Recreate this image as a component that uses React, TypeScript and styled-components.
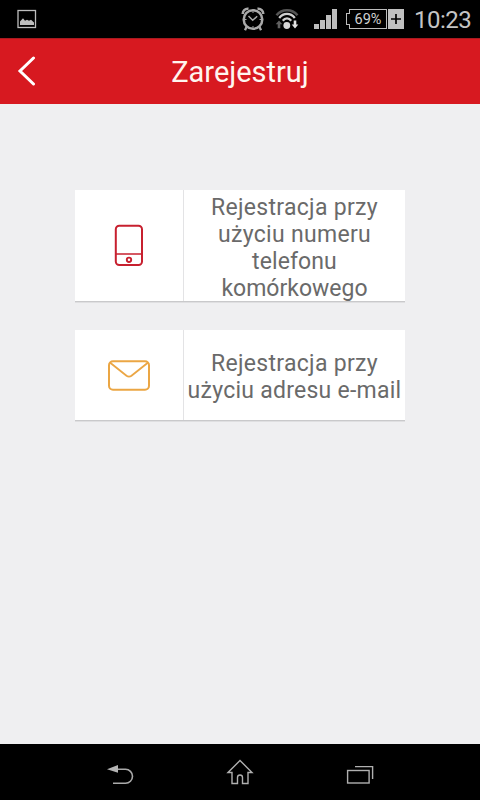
import React from "react";
import styled, { createGlobalStyle } from "styled-components";

const GlobalStyle = createGlobalStyle`
  * { box-sizing: border-box; }
  body { margin: 0; background: #efeff1; font-family: Roboto, sans-serif; }
  svg { display: block; flex: none; }
`;

const Screen = styled.div`
  display: flex;
  flex-direction: column;
  width: 480px;
  height: 800px;
  background: #efeff1;
  overflow: hidden;
`;

const StatusBar = styled.div`
  display: flex;
  align-items: center;
  justify-content: space-between;
  height: 38px;
  padding: 0 8px 0 17px;
  background: #000;
`;

const StatusGroup = styled.div`
  display: flex;
  align-items: center;
`;

const StatusIcon = styled.svg<{ $gap: number }>`
  margin-right: ${(p) => p.$gap}px;
`;

const Battery = styled.div`
  display: flex;
  align-items: center;
  height: 20px;
  margin-right: 10px;
`;

const BatteryNub = styled.div`
  width: 4px;
  height: 12px;
  border: 1px solid #bdbdbd;
  border-right: 0;
  margin-right: -1px;
  background: #000;
  z-index: 1;
`;

const BatteryLevel = styled.div`
  width: 38px;
  height: 20px;
  border: 1px solid #bdbdbd;
  color: #d0d0d0;
  font-size: 14.5px;
  line-height: 19px;
  text-align: center;
`;

const BatteryPlus = styled.svg`
  margin-left: 1px;
`;

const Clock = styled.div`
  color: #c4c4c4;
  width: 58px;
  font-size: 24px;
  line-height: 38px;
  padding-top: 1px;
  height: 38px;
  letter-spacing: -0.5px;
  white-space: nowrap;
`;

const Header = styled.header`
  display: grid;
  grid-template-columns: 54px 1fr 54px;
  align-items: center;
  height: 66px;
  background: #d71920;
  border-top: 1px solid #a81a20;
`;

const BackButton = styled.button`
  display: flex;
  align-items: center;
  height: 65px;
  padding: 0 0 2px 17px;
  border: 0;
  background: none;
`;

const Title = styled.h1`
  margin: 0;
  color: #fff5ef;
  font-size: 29px;
  font-weight: 400;
  line-height: 34px;
  text-align: center;
`;

const Content = styled.main`
  display: flex;
  flex: 1;
  flex-direction: column;
  align-items: center;
  gap: 28px;
  padding-top: 86px;
`;

const OptionCard = styled.button<{ $height: number }>`
  display: flex;
  width: 330px;
  height: ${(p) => p.$height}px;
  padding: 0;
  border: 0;
  border-bottom: 1px solid #c9c9cb;
  box-shadow: 0 1px 0 #dfdfe1;
  background: #fff;
  font-family: inherit;
`;

const IconCell = styled.span`
  display: flex;
  align-items: center;
  justify-content: center;
  width: 109px;
  height: 100%;
  border-right: 1px solid #e3e3e5;
`;

const Label = styled.span`
  display: flex;
  flex: 1;
  flex-direction: column;
  align-items: center;
  justify-content: center;
  height: 100%;
  padding-top: 4px;
  color: #6a6a6a;
  font-size: 23px;
  line-height: 27px;
`;

const Line = styled.span<{ $spacing: number }>`
  white-space: nowrap;
  letter-spacing: ${(p) => p.$spacing}px;
`;

const NavBar = styled.nav`
  display: flex;
  align-items: center;
  justify-content: center;
  gap: 80px;
  height: 56px;
  background: #000;
`;

const NavButton = styled.button`
  display: flex;
  width: 40px;
  height: 56px;
  padding: 0;
  border: 0;
  background: none;
`;

const PictureIcon = () => (
  <svg width="20" height="20" viewBox="0 0 20 20">
    <rect x="1" y="1.500" width="17.500" height="17" fill="none" stroke="#bdbdbd" strokeWidth="1.300" />
    <path d="M3 16v-3.500l3-3.300 2 2.500 2-1 2 1 2-1 3 2.800v2.500z" fill="#bdbdbd" />
  </svg>
);

const AlarmIcon = () => (
  <StatusIcon $gap={10} width="24" height="26" viewBox="0 0 24 26" fill="none" stroke="#a9a9a9">
    <circle cx="12" cy="13.500" r="9.300" strokeWidth="2.500" />
    <path d="M7.500 10l4.200 4.300 4.500-4" strokeWidth="1.500" />
    <path d="M1.800 8C1.500 5 4 2.300 7.500 2.800M22.200 8C22.500 5 20 2.300 16.500 2.800" strokeWidth="2.500" />
    <path d="M5.500 21l-1.500 3.300M18.500 21l1.500 3.300" strokeWidth="2.300" />
    <path d="M12 5.500V7M12 20v1.500M4 13.500h1.500M18.500 13.500H20" strokeWidth="1" />
  </StatusIcon>
);

const WifiIcon = () => (
  <StatusIcon $gap={15} width="24" height="24" viewBox="0 0 24 24" fill="none">
    <path d="M1.500 8.300C7 1.700 17 1.700 22.500 8.300" stroke="#555" strokeWidth="2.500" />
    <path d="M4.200 11C8.500 5.600 15.500 5.600 19.800 11" stroke="#cfcfcf" strokeWidth="2.300" />
    <path d="M7.800 13.700C10 10.700 14 10.700 16.200 13.700" stroke="#cfcfcf" strokeWidth="2.300" />
    <circle cx="11.800" cy="18.500" r="3.400" fill="#d6d6d6" />
    <path d="M4 13.500l3.300 3.700H5.300v4H2.700v-4H.700z" fill="#606060" />
    <path d="M18.700 13.500h2.600v4h2l-3.300 4-3.300-4h2z" fill="#e2e2e2" />
  </StatusIcon>
);

const SignalIcon = () => (
  <StatusIcon $gap={9} width="23" height="20" viewBox="0 0 23 20" fill="#bdbdbd">
    <path d="M0 15h5v5H0zM6 11h5v9H6zM12 6h5v14h-5zM18 0h5v20h-5z" />
  </StatusIcon>
);

const PhoneIcon = () => (
  <svg width="30" height="43" viewBox="0 0 30 43" fill="none" stroke="#c7202f" strokeWidth="2">
    <rect x="1.800" y="1.800" width="26.200" height="39.200" rx="3.500" />
    <path d="M2 30h26" strokeWidth="1.500" />
    <circle cx="15" cy="35.800" r="2.200" strokeWidth="1.900" />
  </svg>
);

const MailIcon = () => (
  <svg width="42" height="31" viewBox="0 0 42 31" fill="none" stroke="#eba644" strokeWidth="2">
    <rect x="1" y="1.200" width="40" height="28.500" rx="4" />
    <path d="M2.200 2.800L18.500 15.800Q21 17.600 23.500 15.800L39.800 2.800" strokeWidth="1.800" />
  </svg>
);

const BackNavIcon = () => (
  <svg width="40" height="56" viewBox="0 0 40 56">
    <path d="M14 25.300h11.500a7 7 0 0 1 0 14H13" fill="none" stroke="#aaa" strokeWidth="1.600" />
    <path d="M7 25.300l11-4.300v7.800z" fill="#b4b4b4" />
  </svg>
);

const HomeNavIcon = () => (
  <svg width="40" height="56" viewBox="0 0 40 56" fill="none" stroke="#b0b0b0" strokeWidth="1.400">
    <path d="M8 28.500L20 16.500 32 28.500H28V39.500H22.500V33.500a2.500 2.500 0 0 0-5 0V39.500H12V28.500z" />
  </svg>
);

const RecentsNavIcon = () => (
  <svg width="40" height="56" viewBox="0 0 40 56" fill="none" stroke="#b0b0b0" strokeWidth="1.400">
    <rect x="7.600" y="26.500" width="21.500" height="12.500" />
    <path d="M15 22.600h17.600V35" />
  </svg>
);

export default function App() {
  return (
    <>
      <GlobalStyle />
      <Screen>
        <StatusBar>
          <PictureIcon />
          <StatusGroup>
            <AlarmIcon />
            <WifiIcon />
            <SignalIcon />
            <Battery>
              <BatteryNub />
              <BatteryLevel>69%</BatteryLevel>
              <BatteryPlus width="16" height="20" viewBox="0 0 16 20">
                <path d="M0 0h16v20H0z" fill="#c0c0c0" />
                <path d="M8 5v10M3 10h10" stroke="#000" strokeWidth="1.700" />
              </BatteryPlus>
            </Battery>
            <Clock>10:23</Clock>
          </StatusGroup>
        </StatusBar>
        <Header>
          <BackButton aria-label="Wstecz">
            <svg width="20" height="30" viewBox="0 0 20 30">
              <path d="M16.500 2L3 15l13.500 13" fill="none" stroke="#fff" strokeWidth="3" strokeLinecap="round" />
            </svg>
          </BackButton>
          <Title>Zarejestruj</Title>
        </Header>
        <Content>
          <OptionCard $height={112}>
            <IconCell>
              <PhoneIcon />
            </IconCell>
            <Label>
              <Line $spacing={0.3}>Rejestracja przy</Line>
              <Line $spacing={0.3}>użyciu numeru</Line>
              <Line $spacing={0.1}>telefonu</Line>
              <Line $spacing={0}>komórkowego</Line>
            </Label>
          </OptionCard>
          <OptionCard $height={91}>
            <IconCell>
              <MailIcon />
            </IconCell>
            <Label>
              <Line $spacing={0.3}>Rejestracja przy</Line>
              <Line $spacing={0.25}>użyciu adresu e-mail</Line>
            </Label>
          </OptionCard>
        </Content>
        <NavBar>
          <NavButton aria-label="Wstecz">
            <BackNavIcon />
          </NavButton>
          <NavButton aria-label="Ekran główny">
            <HomeNavIcon />
          </NavButton>
          <NavButton aria-label="Ostatnie aplikacje">
            <RecentsNavIcon />
          </NavButton>
        </NavBar>
      </Screen>
    </>
  );
}
